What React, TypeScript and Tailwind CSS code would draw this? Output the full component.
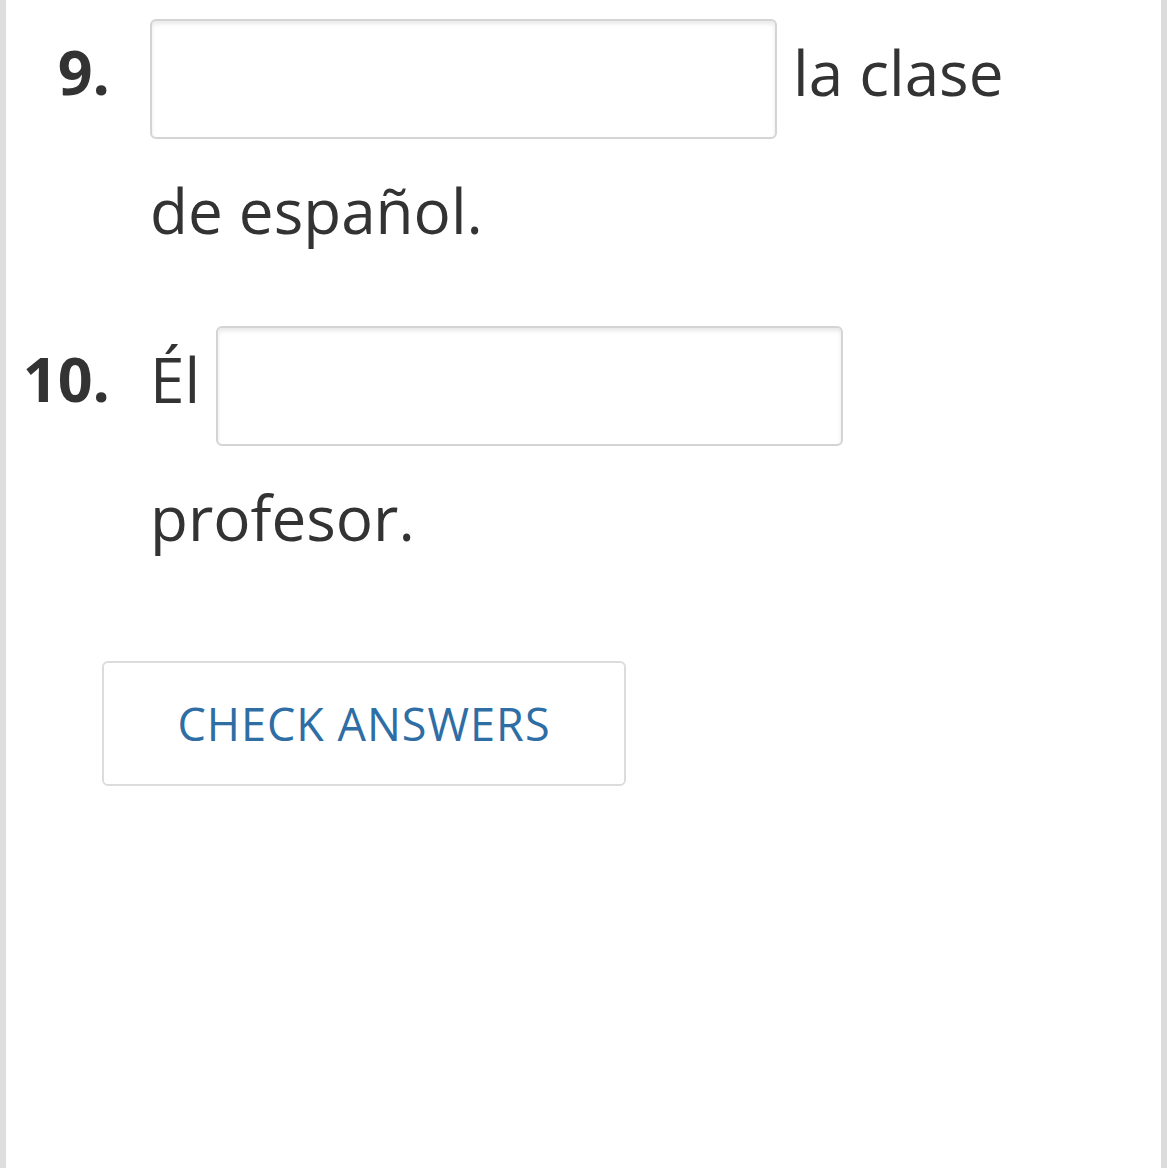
import React from 'react';

function Blank() {
  return (
    <span className="inline-block h-[120px] w-[627px] rounded-[6px] border-2 border-[#d4d4d4] bg-white align-middle shadow-[inset_0_3px_4px_rgba(0,0,0,0.09)]" />
  );
}

type Item = { n: number; before?: string; after: string };

const ITEMS: Item[] = [
  { n: 9, after: 'la clase de español.' },
  { n: 10, before: 'Él', after: 'profesor.' },
];

export default function App() {
  return (
    <div className="flex min-h-screen bg-white font-['Open_Sans',sans-serif] text-[#333333]">
      <div className="w-[6px] shrink-0 bg-[#dedede]" />
      <main className="flex-1 pt-[3px]">
        <ol className="flex flex-col gap-[31px]">
          {ITEMS.map((item) => (
            <li key={item.n} className="flex gap-[40px] leading-[138px]">
              <span className="w-[104px] shrink-0 text-right text-[61px] font-bold">{item.n}.</span>
              <p className="w-[890px] text-[62px]">
                {item.before && <>{item.before} </>}
                <Blank /> {item.after}
              </p>
            </li>
          ))}
        </ol>
        <button className="ml-[96px] mt-[75px] flex h-[125px] w-[524px] items-center justify-center rounded-[6px] border-2 border-[#dcdcdc] bg-white text-[45px] tracking-[1px] text-[#2f6ea5]">
          CHECK ANSWERS
        </button>
      </main>
      <div className="w-[6px] shrink-0 bg-[#dcdcdc]" />
    </div>
  );
}
